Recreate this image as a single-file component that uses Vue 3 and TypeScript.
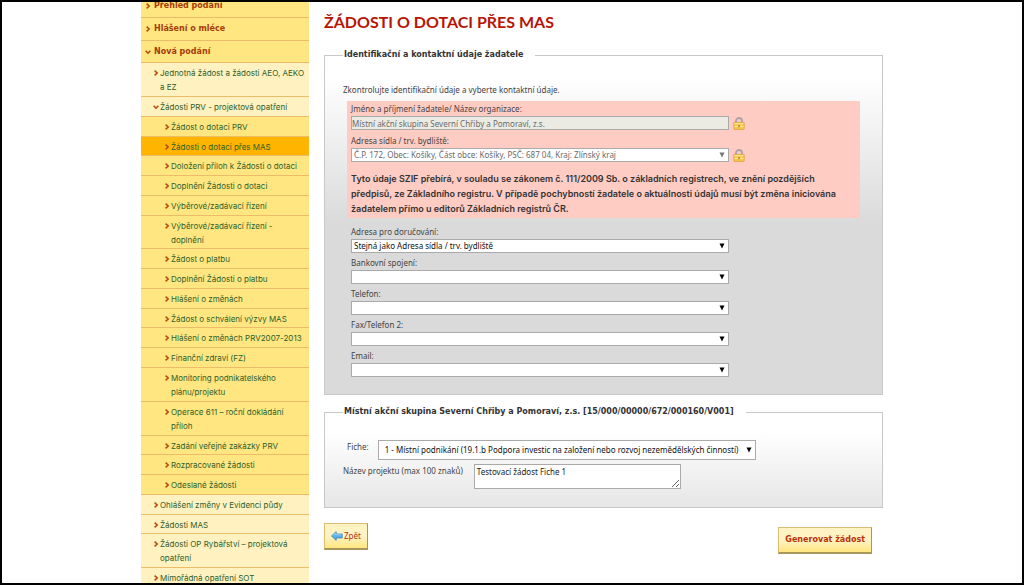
<script setup lang="ts">
import { ref } from 'vue'

interface MenuItem {
  label: string
  level: 1 | 2 | 3
  open?: boolean
  active?: boolean
}

interface ContactField {
  id: string
  label: string
  value: string
}

const menu: MenuItem[] = [
  { label: 'Přehled podání', level: 1 },
  { label: 'Hlášení o mléce', level: 1 },
  { label: 'Nová podání', level: 1, open: true },
  { label: 'Jednotná žádost a žádosti AEO, AEKO\na EZ', level: 2 },
  { label: 'Žádosti PRV - projektová opatření', level: 2, open: true },
  { label: 'Žádost o dotaci PRV', level: 3 },
  { label: 'Žádosti o dotaci přes MAS', level: 3, active: true },
  { label: 'Doložení příloh k Žádosti o dotaci', level: 3 },
  { label: 'Doplnění Žádosti o dotaci', level: 3 },
  { label: 'Výběrové/zadávací řízení', level: 3 },
  { label: 'Výběrové/zadávací řízení -\ndoplnění', level: 3 },
  { label: 'Žádost o platbu', level: 3 },
  { label: 'Doplnění Žádosti o platbu', level: 3 },
  { label: 'Hlášení o změnách', level: 3 },
  { label: 'Žádost o schválení výzvy MAS', level: 3 },
  { label: 'Hlášení o změnách PRV2007-2013', level: 3 },
  { label: 'Finanční zdraví (FZ)', level: 3 },
  { label: 'Monitoring podnikatelského\nplánu/projektu', level: 3 },
  { label: 'Operace 611 – roční dokládání\npříloh', level: 3 },
  { label: 'Zadání veřejné zakázky PRV', level: 3 },
  { label: 'Rozpracované žádosti', level: 3 },
  { label: 'Odeslané žádosti', level: 3 },
  { label: 'Ohlášení změny v Evidenci půdy', level: 2 },
  { label: 'Žádosti MAS', level: 2 },
  { label: 'Žádosti OP Rybářství – projektová\nopatření', level: 2 },
  { label: 'Mimořádná opatření SOT', level: 2 },
]

const contacts: ContactField[] = [
  { id: 'delivery', label: 'Adresa pro doručování:', value: 'Stejná jako Adresa sídla / trv. bydliště' },
  { id: 'bank', label: 'Bankovní spojení:', value: '' },
  { id: 'phone', label: 'Telefon:', value: '' },
  { id: 'fax', label: 'Fax/Telefon 2:', value: '' },
  { id: 'email', label: 'Email:', value: '' },
]

const organisation = 'Místní akční skupina Severní Chřiby a Pomoraví, z.s.'
const projectName = ref('Testovací žádost Fiche 1')
</script>

<template>
  <div class="frame">
    <div class="page">
      <nav class="menu">
        <a
          v-for="item in menu"
          :key="item.label"
          href="#"
          class="row"
          :class="['level' + item.level, { active: item.active }]"
        >
          <svg class="chevron" viewBox="0 0 6 6" aria-hidden="true">
            <path v-if="item.open" d="M0.6 1.8 L3 4.2 L5.4 1.8" />
            <path v-else d="M1.6 0.6 L4.2 3 L1.6 5.4" />
          </svg>
          <span>{{ item.label }}</span>
        </a>
      </nav>

      <main class="content">
        <h1>ŽÁDOSTI O DOTACI PŘES MAS</h1>

        <fieldset class="applicant">
          <legend>Identifikační a kontaktní údaje žadatele</legend>
          <p class="intro">Zkontrolujte identifikační údaje a vyberte kontaktní údaje.</p>

          <div class="registry">
            <label for="org">Jméno a příjmení žadatele/ Název organizace:</label>
            <div class="line">
              <input id="org" class="control" type="text" :value="organisation" disabled />
              <svg class="lock" viewBox="0 0 12 13" aria-hidden="true">
                <path d="M3 6.5V4a3 3 0 0 1 6 0v2.5" fill="none" stroke="#a7a3a8" stroke-width="1.8" />
                <rect x="0.8" y="5.4" width="10.4" height="7" rx="0.6" fill="#f9c850" stroke="#e0a040" stroke-width="0.8" />
                <path d="M1.6 6.6h8.8M1.6 9.4h8.8" stroke="#fff0a0" stroke-width="0.9" />
                <path d="M6 8v2.2" stroke="#a8762c" stroke-width="1.3" />
              </svg>
            </div>
            <label for="seat" class="second">Adresa sídla / trv. bydliště:</label>
            <div class="line">
              <span class="select muted">
                <select id="seat" class="control" disabled>
                  <option>Č.P. 172, Obec: Košíky, Část obce: Košíky, PSČ: 687 04, Kraj: Zlínský kraj</option>
                </select>
                <svg class="arrow" viewBox="0 0 6 6" aria-hidden="true"><path d="M0.5 0.5h5L3 5.6z" /></svg>
              </span>
              <svg class="lock" viewBox="0 0 12 13" aria-hidden="true">
                <path d="M3 6.5V4a3 3 0 0 1 6 0v2.5" fill="none" stroke="#a7a3a8" stroke-width="1.8" />
                <rect x="0.8" y="5.4" width="10.4" height="7" rx="0.6" fill="#f9c850" stroke="#e0a040" stroke-width="0.8" />
                <path d="M1.6 6.6h8.8M1.6 9.4h8.8" stroke="#fff0a0" stroke-width="0.9" />
                <path d="M6 8v2.2" stroke="#a8762c" stroke-width="1.3" />
              </svg>
            </div>
            <p class="notice">
              Tyto údaje SZIF přebírá, v souladu se zákonem č. 111/2009 Sb. o základních registrech, ve znění pozdějších<br />
              předpisů, ze Základního registru. V případě pochybností žadatele o aktuálnosti údajů musí být změna iniciována<br />
              žadatelem přímo u editorů Základních registrů ČR.
            </p>
          </div>

          <div class="contacts">
            <div v-for="field in contacts" :key="field.id" class="contact">
              <label :for="field.id">{{ field.label }}</label>
              <span class="select">
                <select :id="field.id" class="control">
                  <option>{{ field.value }}</option>
                </select>
                <svg class="arrow" viewBox="0 0 6 6" aria-hidden="true"><path d="M0.5 0.5h5L3 5.6z" /></svg>
              </span>
            </div>
          </div>
        </fieldset>

        <fieldset class="project">
          <legend>Místní akční skupina Severní Chřiby a Pomoraví, z.s. [15/000/00000/672/000160/V001]</legend>
          <div class="fiche">
            <label for="fiche">Fiche:</label>
            <span class="select large">
              <select id="fiche" class="control">
                <option>1 - Místní podnikání (19.1.b Podpora investic na založení nebo rozvoj nezemědělských činností)</option>
              </select>
              <svg class="arrow" viewBox="0 0 6 6" aria-hidden="true"><path d="M0.5 0.5h5L3 5.6z" /></svg>
            </span>
          </div>
          <div class="name">
            <label for="project">Název projektu (max 100 znaků)</label>
            <textarea id="project" v-model="projectName" maxlength="100"></textarea>
          </div>
        </fieldset>

        <div class="actions">
          <button type="button" class="back">
            <svg viewBox="0 0 12 10" aria-hidden="true">
              <path d="M0.5 5 L5.2 0.6 V3 H11.2 V7 H5.2 V9.4 Z" fill="#58b0e4" stroke="#3c86bd" stroke-width="0.8" />
              <path d="M2 4.7 L4.7 2.2 V3.8 H10.4" fill="none" stroke="#a9dcf6" stroke-width="0.8" />
            </svg>
            Zpět
          </button>
          <button type="button" class="generate">Generovat žádost</button>
        </div>
      </main>
    </div>
  </div>
</template>

<style>
body {
  margin: 0;
  background: #fff;
}
</style>

<style scoped>
.frame {
  box-sizing: border-box;
  height: 100vh;
  overflow: hidden;
  border: 2px solid #000;
  background: #fff;
  color: #444;
  font: 8px/14px "Noto Sans", "Open Sans", sans-serif;
}

.page {
  display: grid;
  grid-template-columns: 168px 1fr;
  column-gap: 15px;
  max-width: 742px;
  margin: 0 auto;
}

.menu {
  display: flex;
  flex-direction: column;
  height: calc(100vh + 8px);
  margin-top: -7px;
}

.row {
  display: flex;
  flex: 1 0 auto;
  align-items: flex-start;
  box-sizing: border-box;
  padding: 3px 0 1px 30px;
  border-bottom: 1px solid #ecbc68;
  background: #ffe680;
  color: #2f5f2c;
  font: 8px/14px Inter, "Noto Sans", sans-serif;
  text-decoration: none;
  white-space: pre;
}

.row.level1 {
  padding: 4px 0 3px 13px;
  color: #a63c08;
  font: bold 8px/14px "DejaVu Sans", sans-serif;
}

.row.level2 {
  padding-left: 19px;
  background: #fff1c0;
}

.row.level1 .chevron {
  margin: 4px 3px 0 -9px;
}

.row.active {
  background: #ffb400;
}

.chevron {
  flex: none;
  width: 6px;
  height: 6px;
  margin: 4px 1px 0 -7px;
  fill: none;
  stroke: #b8480a;
  stroke-width: 1.5;
}

h1 {
  margin: 9px 0 15px;
  color: #b81406;
  font: bold 16px/22px Lato, sans-serif;
}

fieldset {
  min-width: 0;
  margin: 0;
  border: 1px solid #c8c8c8;
  padding: 0 22px 0 18px;
}

legend {
  padding: 0 12px 0 1px;
  background: #fff;
  color: #333;
}

legend,
.generate {
  font: bold 8px/14px "DejaVu Sans", sans-serif;
}

.applicant {
  padding-bottom: 17px;
  background: linear-gradient(#fff 6%, #dadada 50%);
}

.intro {
  margin: 21px 0 4px;
}

.registry {
  margin-left: 4px;
  padding: 1px 4px 2px;
  background: #ffccc4;
}

label {
  display: block;
}

.second {
  margin-top: 4px;
}

.line {
  display: flex;
  align-items: center;
  gap: 4px;
  height: 14px;
}

.control {
  display: block;
  box-sizing: border-box;
  width: 378px;
  height: 14px;
  margin: 0;
  border: 1px solid #aaa;
  border-radius: 0;
  padding: 0 2px;
  appearance: none;
  background: #fff;
  color: #111;
  font: 8px/12px "Noto Sans", "Open Sans", sans-serif;
}

.control:disabled {
  background: #ebebe4;
  color: #6b6b6b;
  opacity: 1;
}

input.control {
  padding: 0;
}

.select {
  display: block;
  position: relative;
  width: 378px;
}

.select .control:disabled {
  background: #fff;
}

.arrow {
  position: absolute;
  top: 4px;
  right: 4px;
  width: 6px;
  height: 6px;
  pointer-events: none;
}

.muted .arrow {
  fill: #777;
}

.lock {
  width: 12px;
  height: 13px;
}

.notice {
  margin: 9px 0 0;
  color: #333;
  font: 600 9px/15px Inter, "Noto Sans", sans-serif;
  white-space: nowrap;
}

.contacts {
  display: grid;
  gap: 3px;
  margin: 7px 0 0 8px;
}

.project {
  margin-top: 10px;
  padding-bottom: 18px;
  background: linear-gradient(#fff 20%, #e6e6e6);
}

.fiche {
  display: flex;
  align-items: flex-start;
  gap: 9px;
  margin: 21px 0 4px 4px;
}

.large .control {
  height: 20px;
  padding: 0 6px;
}

.large .arrow {
  top: 7px;
}

.name {
  display: flex;
  gap: 11px;
}

textarea {
  box-sizing: border-box;
  width: 207px;
  height: 25px;
  margin: 0;
  border: 1px solid #aaa;
  padding: 1px 2px;
  background: #fff;
  color: #222;
  font: 8px/12px "Noto Sans", "Open Sans", sans-serif;
}

.actions {
  display: flex;
  justify-content: space-between;
  margin: 15px 11px 0 0;
}

button {
  box-sizing: border-box;
  height: 27px;
  border: 1px solid #d8bd72;
  border-right-color: #a8965c;
  border-bottom: 2px solid #a8965c;
  padding: 0 6px;
  background: linear-gradient(#fff3c4 50%, #ffe680);
  color: #b8320a;
}

.back {
  display: flex;
  align-items: center;
  gap: 1px;
  font: 8px/14px "Noto Sans", "Open Sans", sans-serif;
}

.back svg {
  width: 12px;
  height: 10px;
}

.generate {
  margin-top: 4px;
}
</style>
